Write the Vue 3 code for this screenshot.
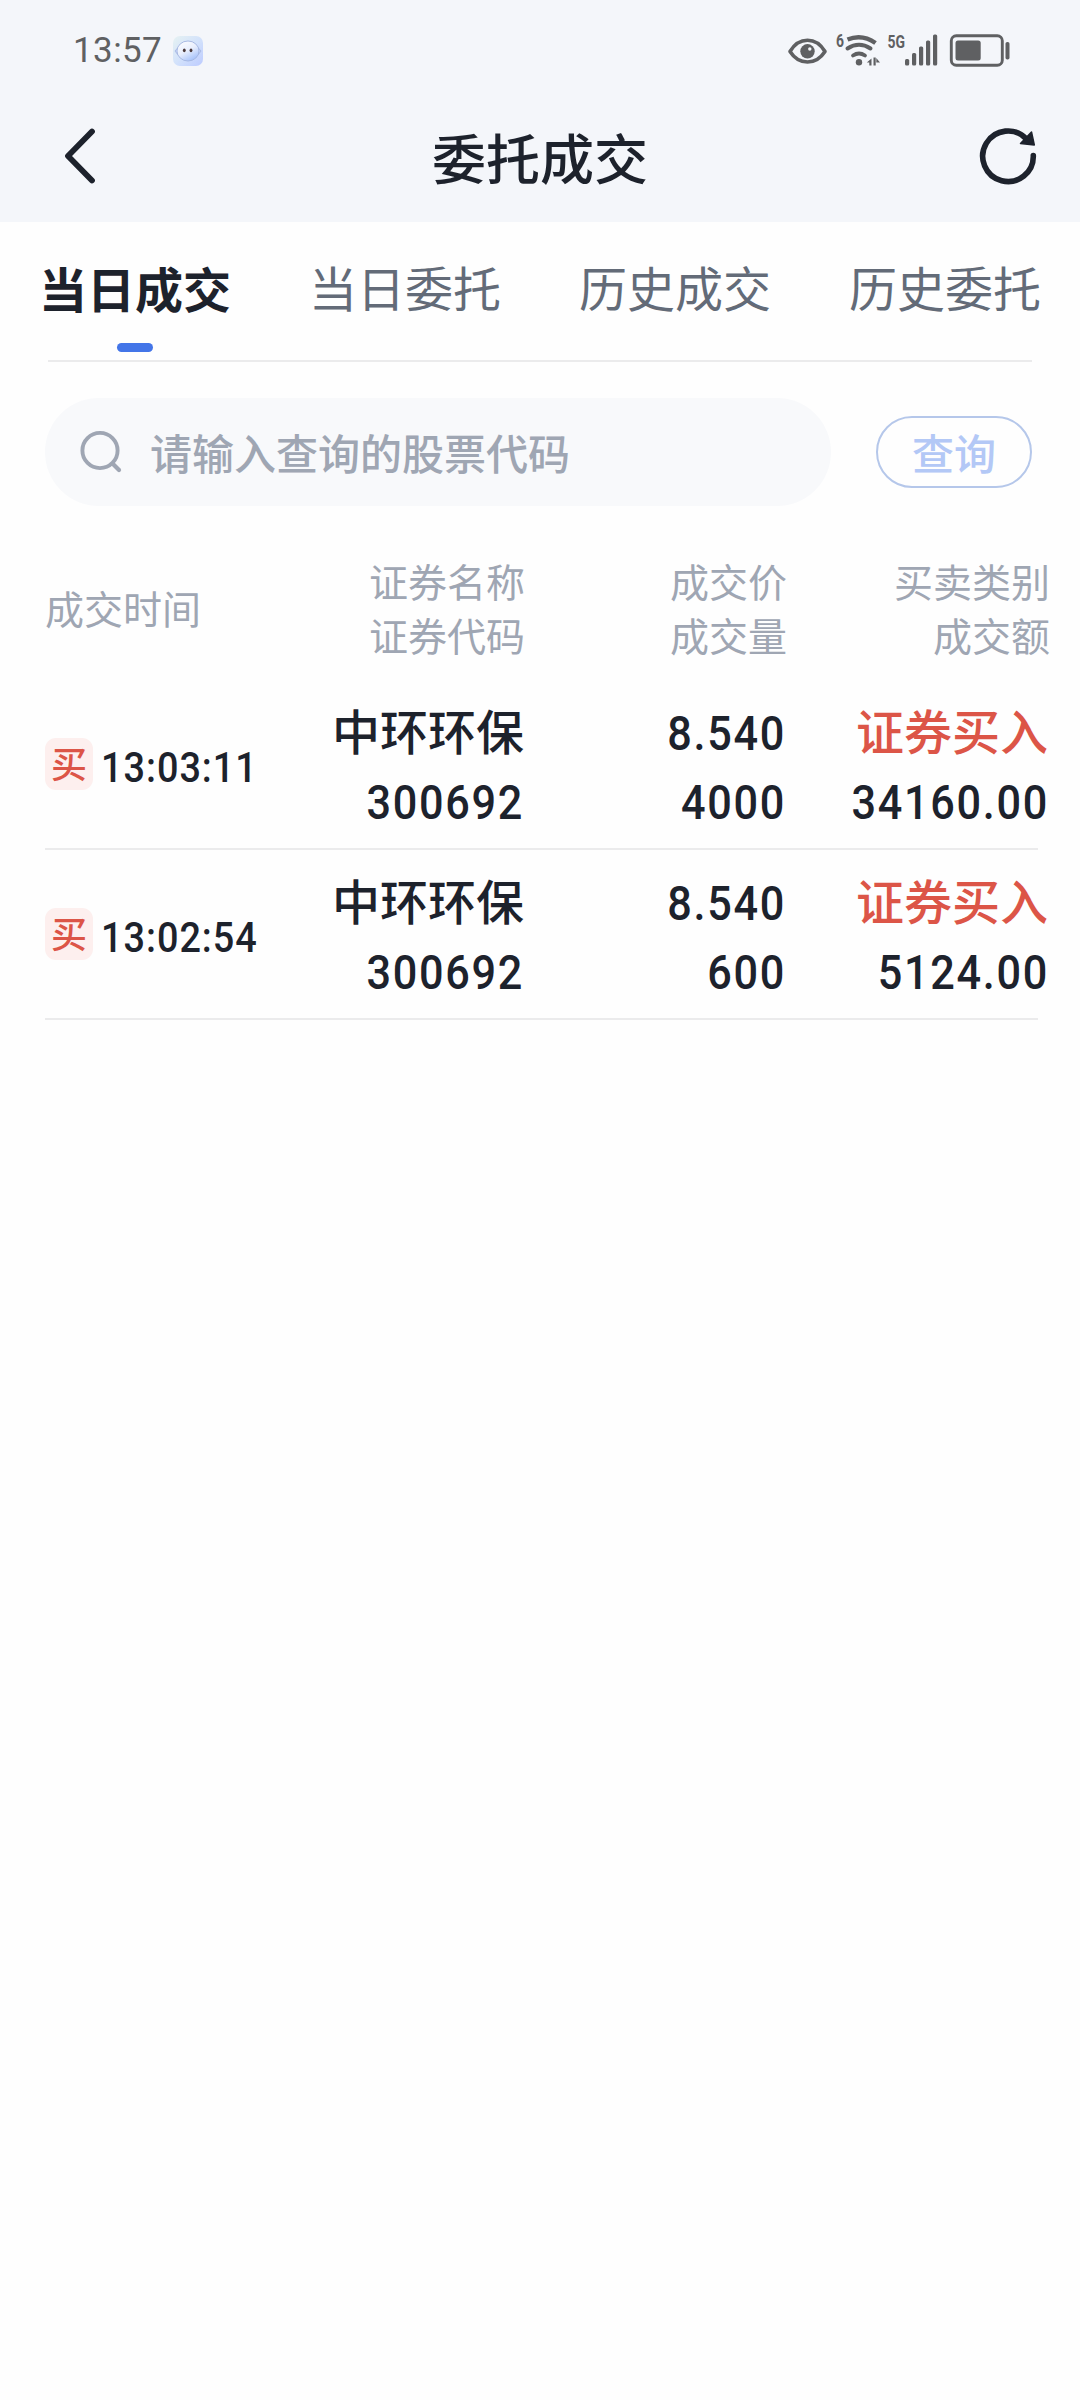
<script setup>
const tabs = ['当日成交', '当日委托', '历史成交', '历史委托']
const activeTab = 0

const columns = [
  ['证券名称', '证券代码'],
  ['成交价', '成交量'],
  ['买卖类别', '成交额'],
]

const deals = [
  { time: '13:03:11', name: '中环环保', code: '300692', price: '8.540', volume: '4000', type: '证券买入', amount: '34160.00' },
  { time: '13:02:54', name: '中环环保', code: '300692', price: '8.540', volume: '600', type: '证券买入', amount: '5124.00' },
]
</script>

<template>
  <div class="page">
    <header class="top">
      <div class="status">
        <span class="clock">13:57</span>
        <svg class="app-icon" width="30" height="30" viewBox="0 0 30 30">
          <defs>
            <linearGradient id="appBg" x1="0" y1="0" x2="1" y2="1">
              <stop offset="0" stop-color="#e6f2f2" />
              <stop offset="0.5" stop-color="#d3e2fb" />
              <stop offset="1" stop-color="#bccbff" />
            </linearGradient>
            <linearGradient id="face" x1="0" y1="0" x2="0.6" y2="1">
              <stop offset="0" stop-color="#ffffff" />
              <stop offset="0.55" stop-color="#e9effd" />
              <stop offset="1" stop-color="#a9c4fb" />
            </linearGradient>
          </defs>
          <rect width="30" height="30" rx="7" fill="url(#appBg)" />
          <path d="M5 11.5 2 15l3 4M25 11.5 28 15l-3 4" fill="#c9d8fa" stroke="#a3b4e0" stroke-width="0.8" />
          <ellipse cx="15" cy="15" rx="11" ry="10" fill="url(#face)" stroke="#a3b4e0" stroke-width="0.9" />
          <ellipse cx="11.3" cy="14.3" rx="1.4" ry="1.9" fill="#4b3a3c" />
          <ellipse cx="18" cy="14.3" rx="1.4" ry="1.9" fill="#4b3a3c" />
        </svg>
        <svg class="indicators" width="260" height="70" viewBox="0 0 260 70">
          <g fill="none" stroke="#5f6062" stroke-linecap="round">
            <path d="M20 36.500C29 21.500 46 21.500 55 36.500C46 50.500 29 50.500 20 36.500Z" stroke-width="3.600" stroke-linejoin="round" />
            <path d="M77.500 24.500Q92 18.500 105.500 28" stroke-width="4.400" stroke-linecap="butt" />
            <path d="M77.500 33.500Q89 26 100.500 33.500" stroke-width="4" />
            <path d="M83 40.500Q89 36.500 95 40.500" stroke-width="3.800" />
            <rect x="181.300" y="20.800" width="51" height="29.500" rx="5" stroke-width="2.900" />
          </g>
          <g fill="#5f6062">
            <circle cx="37.500" cy="36.300" r="7.200" />
            <circle cx="89" cy="47.200" r="3.200" />
            <path d="M101.500 43.500V50.500H99.300V47.600H96.800ZM103.500 42.500h2.200v8h-2.200ZM106.300 43 110 47.500H106.300Z" />
            <rect x="135" y="44" width="4.200" height="6.500" rx="1.500" />
            <rect x="142" y="38" width="4.200" height="12.500" rx="1.500" />
            <rect x="149" y="31.500" width="4.200" height="19" rx="1.500" />
            <rect x="156" y="25.500" width="4.200" height="25" rx="1.500" />
            <rect x="163" y="19.500" width="4.200" height="31" rx="1.500" />
            <rect x="185.500" y="25.500" width="25.200" height="20" rx="2.500" />
            <rect x="235.500" y="27" width="4" height="17.500" rx="1.800" />
            <text class="mini" x="66" y="32" textLength="8" lengthAdjust="spacingAndGlyphs">6</text>
            <text class="mini" x="117.500" y="33.300" textLength="17.500" lengthAdjust="spacingAndGlyphs">5G</text>
          </g>
          <circle cx="39.800" cy="34" r="1.700" fill="#f4f6fa" />
        </svg>
      </div>
      <div class="nav">
        <svg width="34" height="58" viewBox="0 0 34 58">
          <path d="M29 4.500 5 29 29 53.500" fill="none" stroke="#1d222c" stroke-width="5.800" stroke-linecap="round" stroke-linejoin="round" />
        </svg>
        <h1>委托成交</h1>
        <svg width="60" height="60" viewBox="0 0 60 60">
          <path d="M55.300 29.500A25.300 25.300 0 1 1 48.500 13" fill="none" stroke="#1d222c" stroke-width="5.600" stroke-linecap="round" />
          <path d="M53.500 6 56.300 19 42.500 17.500Z" fill="#1d222c" stroke="#1d222c" stroke-width="1.500" stroke-linejoin="round" />
        </svg>
      </div>
    </header>

    <nav class="tabs">
      <div v-for="(tab, i) in tabs" :key="tab" class="tab" :class="{ active: i === activeTab }">
        <span>{{ tab }}</span>
        <i v-if="i === activeTab"></i>
      </div>
    </nav>
    <div class="tab-line"></div>

    <div class="search">
      <div class="field">
        <svg width="44" height="44" viewBox="0 0 44 44">
          <circle cx="20" cy="20.500" r="17.600" fill="none" stroke="#9fa6b3" stroke-width="3.900" />
          <path d="M33 34 39 40" stroke="#9fa6b3" stroke-width="4.200" stroke-linecap="round" />
        </svg>
        <span>请输入查询的股票代码</span>
      </div>
      <button>查询</button>
    </div>

    <div class="head grid">
      <div class="first">成交时间</div>
      <div v-for="c in columns" :key="c[0]">
        <p>{{ c[0] }}</p>
        <p>{{ c[1] }}</p>
      </div>
    </div>

    <div v-for="d in deals" :key="d.time" class="row">
      <div class="grid body">
        <div class="when"><b>买</b><span>{{ d.time }}</span></div>
        <div><p class="cn">{{ d.name }}</p><p class="digits bottom">{{ d.code }}</p></div>
        <div><p class="digits upper">{{ d.price }}</p><p class="digits bottom">{{ d.volume }}</p></div>
        <div><p class="cn buy">{{ d.type }}</p><p class="digits bottom">{{ d.amount }}</p></div>
      </div>
    </div>
  </div>
</template>

<style>
body { background: #fefefe; }
</style>

<style scoped>
* { box-sizing: border-box; margin: 0; }
.page {
  width: 1080px;
  min-height: 2400px;
  background: #fefefe;
  color: #1d222c;
  font-family: "Noto Sans CJK SC", sans-serif;
}
.top { height: 222px; background: #f4f6fa; }
.status { display: flex; height: 100px; padding: 0 50px 0 73px; }
.clock {
  width: 100px;
  font: 400 35px/102px Roboto, sans-serif;
  letter-spacing: 0.4px;
  color: #5f6062;
}
.app-icon { margin-top: 36px; }
.indicators { margin: 15px 0 0 auto; }
.mini { font: 700 18px Roboto, sans-serif; }
.nav {
  display: flex;
  align-items: center;
  justify-content: space-between;
  height: 112px;
  padding: 0 42px 0 63px;
}
.nav h1 { flex: 1; padding: 2px 0 0 5px; text-align: center; font-size: 54px; font-weight: 500; line-height: 112px; }
.tabs { display: flex; height: 138px; }
.tab {
  display: flex;
  flex: 1;
  flex-direction: column;
  align-items: center;
  color: #636b78;
  font-size: 48px;
  line-height: 128px;
}
.tab span { height: 121px; }
.tab.active { color: #1d222c; font-weight: 700; line-height: 131px; }
.tab i { width: 36px; height: 9px; border-radius: 5px; background: #4375e8; }
.tab-line { height: 2px; margin: 0 48px; background: #ebebec; }
.search {
  display: flex;
  align-items: center;
  justify-content: space-between;
  padding: 36px 48px 0 45px;
}
.field {
  display: flex;
  align-items: center;
  gap: 26px;
  width: 786px;
  height: 108px;
  padding: 0 0 1px 35px;
  border-radius: 54px;
  background: #f8f9fb;
  color: #9fa6b3;
  font-size: 42px;
  font-weight: 500;
}
button {
  width: 156px;
  height: 72px;
  padding: 0;
  border: 2px solid #b5c7ea;
  border-radius: 36px;
  background: transparent;
  color: #b3c8f6;
  font: 500 42px/66px "Noto Sans CJK SC", sans-serif;
}
.grid {
  display: grid;
  grid-template-columns: 230px 250px 262px 263px;
  text-align: right;
}
.head {
  height: 174px;
  padding: 47px 0 0 45px;
  color: #9fa6b3;
  font-size: 39px;
  line-height: 54px;
}
.first { line-height: 108px; text-align: left; }
.row {
  height: 170px;
  padding: 14px 0 0 45px;
  background: linear-gradient(#ebebec, #ebebec) 45px 168px / 993px 2px no-repeat;
}
.body > div { margin-right: 1px; }
.cn { height: 78px; font: 500 48px/70px "Noto Sans CJK SC", sans-serif; }
.buy { margin-right: 1px; }
/* condensed numerals with open tracking */
.digits {
  font: 500 48px Roboto, sans-serif;
  letter-spacing: 1.9px;
  transform: scaleX(0.9);
  transform-origin: right;
}
.digits.upper { line-height: 79px; height: 78px; }
.digits.bottom { line-height: 61px; }
.buy { color: #dc5547; }
.when { display: flex; align-items: center; height: 140px; }
.when b {
  flex: none;
  width: 48px;
  height: 52px;
  border-radius: 11px;
  background: #fdefee;
  color: #dc5547;
  font: 500 36px/49px "Noto Sans CJK SC", sans-serif;
  text-align: center;
}
.when span {
  margin: 6px 0 0 8px;
  font: 500 42px Roboto, sans-serif;
  letter-spacing: 1.1px;
  white-space: nowrap;
  transform: scaleX(0.9);
  transform-origin: left;
}
</style>
